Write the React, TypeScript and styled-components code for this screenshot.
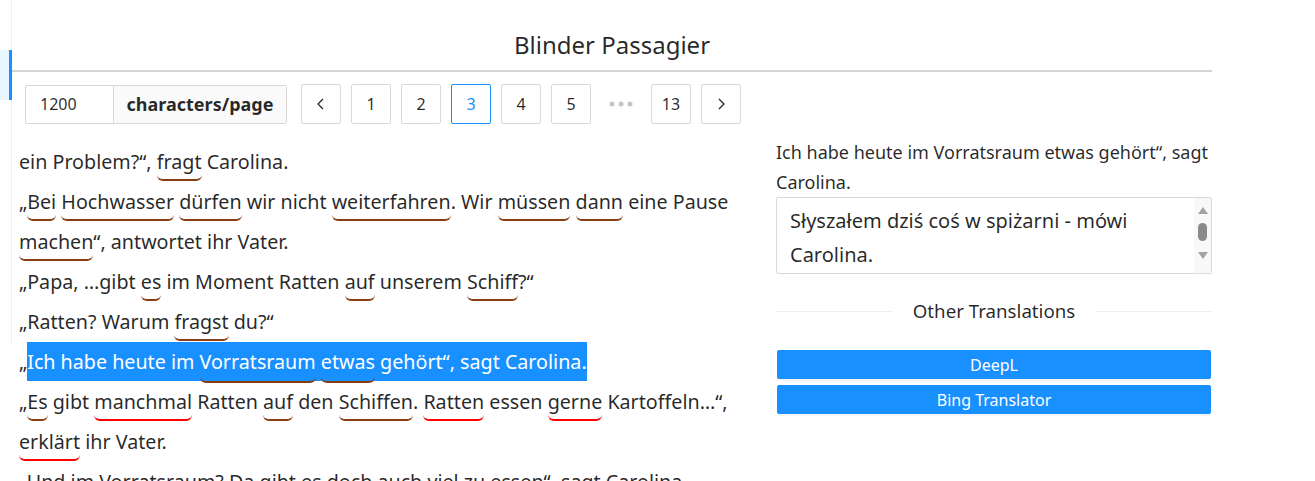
import React from "react";
import styled, { createGlobalStyle } from "styled-components";

const GlobalStyle = createGlobalStyle`
  body {
    margin: 0;
    background: #fff;
    font-family: "Noto Sans", "Open Sans", sans-serif;
    color: rgba(0, 0, 0, 0.85);
  }
`;

type Mark = "brown" | "red";
type Piece = string | { w: string; m: Mark };

const lines: { pieces: Piece[] }[] = [
  { pieces: ["ein Problem?“, ", { w: "fragt", m: "brown" }, " Carolina."] },
  {
    pieces: [
      "„",
      { w: "Bei", m: "brown" },
      " ",
      { w: "Hochwasser", m: "brown" },
      " ",
      { w: "dürfen", m: "brown" },
      " wir nicht ",
      { w: "weiterfahren", m: "brown" },
      ". Wir ",
      { w: "müssen", m: "brown" },
      " ",
      { w: "dann", m: "brown" },
      " eine Pause ",
      { w: "machen", m: "brown" },
      "“, antwortet ihr Vater.",
    ],
  },
  {
    pieces: [
      "„Papa, …gibt ",
      { w: "es", m: "brown" },
      " im Moment Ratten ",
      { w: "auf", m: "brown" },
      " unserem ",
      { w: "Schiff", m: "brown" },
      "?“",
    ],
  },
  { pieces: ["„Ratten? Warum ", { w: "fragst", m: "brown" }, " du?“"] },
];

const after: { pieces: Piece[] }[] = [
  {
    pieces: [
      "„",
      { w: "Es", m: "brown" },
      " gibt ",
      { w: "manchmal", m: "red" },
      " Ratten ",
      { w: "auf", m: "brown" },
      " den ",
      { w: "Schiffen", m: "brown" },
      ". ",
      { w: "Ratten", m: "red" },
      " essen ",
      { w: "gerne", m: "red" },
      " Kartoffeln…“, ",
      { w: "erklärt", m: "red" },
      " ihr Vater.",
    ],
  },
  { pieces: ["„Und im Vorratsraum? Da gibt es doch auch viel zu essen“, sagt Carolina."] },
];

export default function App() {
  return (
    <>
      <GlobalStyle />
      <Page>
        <Sider>
          <MenuItem />
        </Sider>
        <Main>
          <Title>Blinder Passagier</Title>
          <Rule />
          <Toolbar>
            <InputGroup>
              <SizeInput>1200</SizeInput>
              <Addon>characters/page</Addon>
            </InputGroup>
            <Pager>
              <PageItem>
                <Chevron dir="left" />
              </PageItem>
              <PageItem>1</PageItem>
              <PageItem>2</PageItem>
              <PageItem $active>3</PageItem>
              <PageItem>4</PageItem>
              <PageItem>5</PageItem>
              <Ellipsis>
                <svg width="24" height="6" viewBox="0 0 24 6">
                  <circle cx="3" cy="3" r="2.5" fill="#c4c4c4" />
                  <circle cx="12" cy="3" r="2.5" fill="#c4c4c4" />
                  <circle cx="21" cy="3" r="2.5" fill="#c4c4c4" />
                </svg>
              </Ellipsis>
              <PageItem>13</PageItem>
              <PageItem>
                <Chevron dir="right" />
              </PageItem>
            </Pager>
          </Toolbar>
          <Content>
            <Reader>
              {lines.map((l, i) => (
                <Sentence key={i}>{renderPieces(l.pieces)}</Sentence>
              ))}
              <Sentence>
                „
                <Highlight>
                  Ich habe heute im <Word $mark="brown" $deep>Vorratsraum</Word>{" "}
                  <Word $mark="brown" $deep>etwas</Word> gehört“, sagt Carolina.
                </Highlight>
              </Sentence>
              {after.map((l, i) => (
                <Sentence key={i}>{renderPieces(l.pieces)}</Sentence>
              ))}
            </Reader>
            <Side>
              <Source>Ich habe heute im Vorratsraum etwas gehört“, sagt Carolina.</Source>
              <TextBox>
                <TextBody>Słyszałem dziś coś w spiżarni - mówi Carolina.</TextBody>
                <ScrollBar>
                  <svg width="10" height="7" viewBox="0 0 10 7">
                    <path d="M5 0 L10 7 L0 7 Z" fill="#a3a3a3" />
                  </svg>
                  <Thumb />
                  <svg width="10" height="7" viewBox="0 0 10 7">
                    <path d="M0 0 L10 0 L5 7 Z" fill="#a3a3a3" />
                  </svg>
                </ScrollBar>
              </TextBox>
              <Divider>Other Translations</Divider>
              <Buttons>
                <PrimaryButton>DeepL</PrimaryButton>
                <PrimaryButton>Bing Translator</PrimaryButton>
              </Buttons>
            </Side>
          </Content>
        </Main>
      </Page>
    </>
  );
}

function renderPieces(pieces: Piece[]) {
  return pieces.map((p, i) =>
    typeof p === "string" ? (
      <React.Fragment key={i}>{p}</React.Fragment>
    ) : (
      <Word key={i} $mark={p.m}>
        {p.w}
      </Word>
    )
  );
}

function Chevron({ dir }: { dir: "left" | "right" }) {
  return (
    <svg width="12" height="12" viewBox="0 0 12 12">
      <path
        d={dir === "left" ? "M8 1 L3 6 L8 11" : "M4 1 L9 6 L4 11"}
        fill="none"
        stroke="rgba(0,0,0,0.85)"
        strokeWidth="1.3"
      />
    </svg>
  );
}

const Page = styled.div`
  display: flex;
  align-items: flex-start;
  height: 481px;
  overflow: hidden;
`;

const Sider = styled.div`
  width: 12px;
  height: 345px;
  border-right: 1px solid #f0f0f0;
  padding-top: 50px;
  box-sizing: border-box;
  flex: none;
`;

const MenuItem = styled.div`
  height: 50px;
  background: #e6f7ff;
  border-right: 3px solid #1890ff;
  margin-right: -1px;
`;

const Main = styled.div`
  width: 1200px;
  flex: none;
`;

const Title = styled.h3`
  margin: 0;
  padding-top: 29px;
  height: 32px;
  line-height: 32px;
  text-align: center;
  font-size: 24px;
  font-weight: 400;
`;

const Rule = styled.div`
  margin-top: 9px;
  height: 2px;
  background: #d4d4d4;
`;

const Toolbar = styled.div`
  display: flex;
  align-items: center;
  gap: 14px;
  margin-top: 12px;
  padding-left: 13px;
  height: 40px;
`;

const InputGroup = styled.div`
  display: flex;
  height: 39px;
  border: 1px solid #d9d9d9;
  border-radius: 2px;
  box-sizing: border-box;
`;

const SizeInput = styled.div`
  width: 87px;
  box-sizing: border-box;
  padding-left: 14px;
  display: flex;
  align-items: center;
  font-size: 16px;
`;

const Addon = styled.div`
  width: 173px;
  box-sizing: border-box;
  border-left: 1px solid #d9d9d9;
  background: #fafafa;
  display: flex;
  align-items: center;
  justify-content: center;
  font-size: 18px;
  font-weight: 700;
`;

const Pager = styled.div`
  display: flex;
  align-items: center;
  gap: 10px;
`;

const PageItem = styled.div<{ $active?: boolean }>`
  width: 40px;
  height: 40px;
  box-sizing: border-box;
  border: 1px solid ${(p) => (p.$active ? "#1890ff" : "#d9d9d9")};
  border-radius: 2px;
  color: ${(p) => (p.$active ? "#1890ff" : "rgba(0,0,0,0.85)")};
  display: flex;
  align-items: center;
  justify-content: center;
  font-size: 16px;
`;

const Ellipsis = styled.div`
  width: 40px;
  display: flex;
  justify-content: center;
  align-items: center;
`;

const Content = styled.div`
  display: grid;
  grid-template-columns: 1fr 436px;
  gap: 20px;
  margin-top: 13px;
  padding-left: 7px;
`;

const Reader = styled.div`
  padding-top: 5px;
  font-size: 19.7px;
  line-height: 40px;
`;

const Sentence = styled.div``;

const Word = styled.span<{ $mark: Mark; $deep?: boolean }>`
  padding-bottom: ${(p) => (p.$deep ? "6px" : "4px")};
  border-bottom: 2px solid ${(p) => (p.$mark === "red" ? "#ff0000" : "#8b3d12")};
  border-radius: 0 0 6px 6px;
`;

const Highlight = styled.span`
  background: #1890ff;
  color: #fff;
  padding: 6px 0 6px;
`;

const Side = styled.div`
  display: flex;
  flex-direction: column;
`;

const Source = styled.div`
  font-size: 18px;
  line-height: 30px;
`;

const TextBox = styled.div`
  display: flex;
  height: 77px;
  box-sizing: border-box;
  border: 1px solid #d9d9d9;
  border-radius: 2px;
`;

const TextBody = styled.div`
  flex: 1;
  padding: 6px 13px;
  font-size: 20px;
  line-height: 34px;
  overflow: hidden;
`;

const ScrollBar = styled.div`
  width: 17px;
  background: #f8f8f8;
  display: flex;
  flex-direction: column;
  align-items: center;
  padding: 9px 0 6px;
  box-sizing: border-box;
`;

const Thumb = styled.div`
  width: 9px;
  height: 18px;
  margin: 9px 0 11px;
  border-radius: 5px;
  background: #8a8a8a;
`;

const Divider = styled.div`
  display: flex;
  align-items: center;
  margin: 24px 0 26px;
  font-size: 18.7px;
  line-height: 26px;

  &::before,
  &::after {
    content: "";
    flex: 1;
    border-top: 1px solid #f0f0f0;
  }
  &::before {
    margin-right: 20px;
  }
  &::after {
    margin-left: 20px;
  }
`;

const Buttons = styled.div`
  display: flex;
  flex-direction: column;
  gap: 6px;
  padding: 0 1px;
`;

const PrimaryButton = styled.div`
  height: 29px;
  background: #1890ff;
  border-radius: 2px;
  color: #fff;
  font-size: 16px;
  display: flex;
  align-items: center;
  justify-content: center;
  box-shadow: 0 2px 0 rgba(0, 0, 0, 0.045);
`;
